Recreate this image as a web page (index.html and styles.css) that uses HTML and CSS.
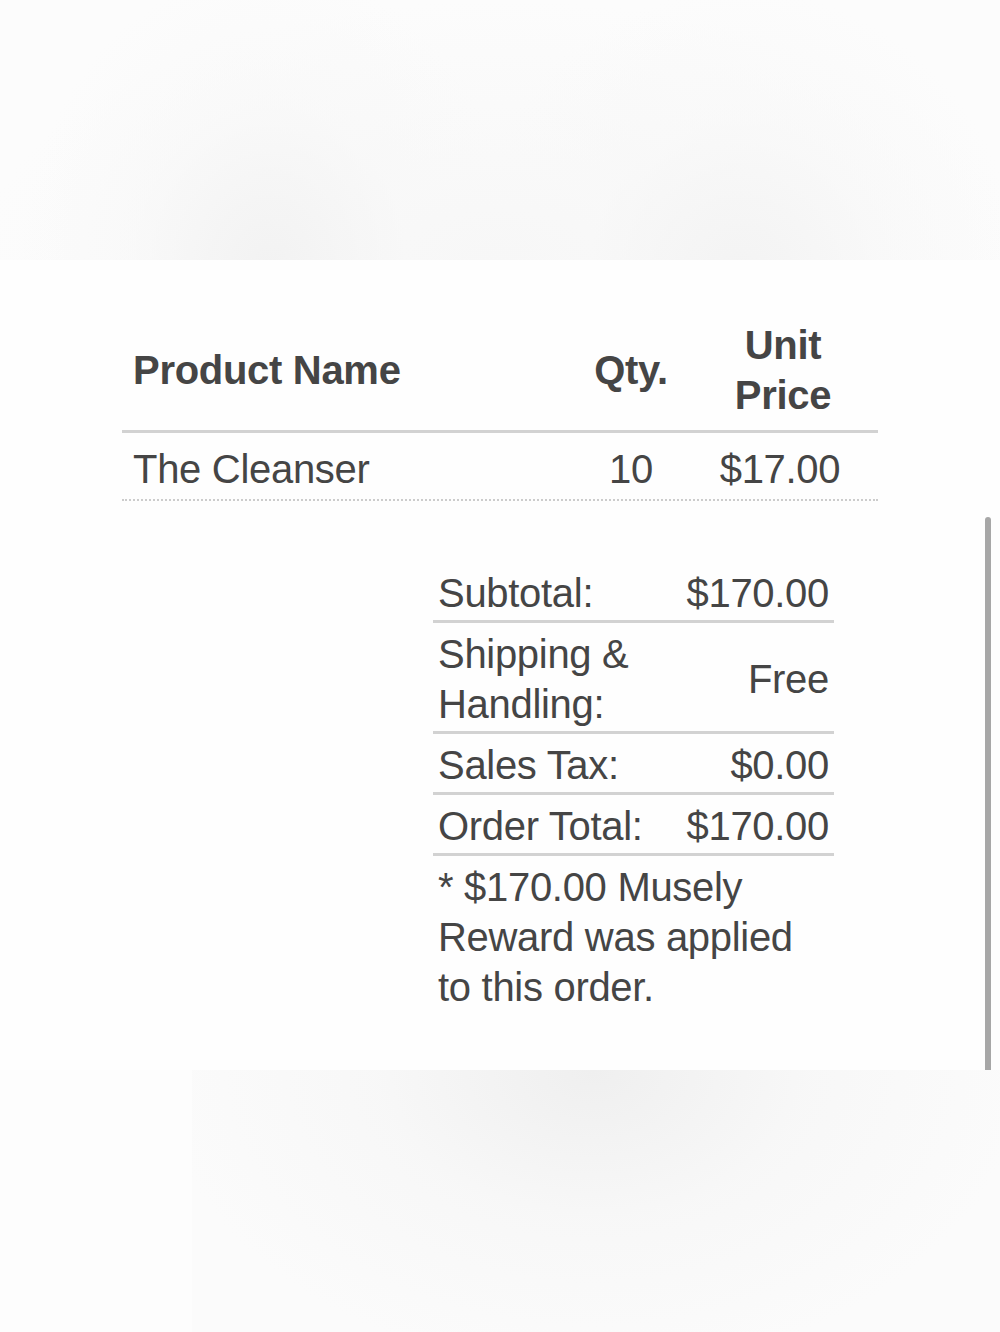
FILE: index.html
```html
<!DOCTYPE html>
<html lang="en">
<head>
<meta charset="utf-8">
<title>Order Summary</title>
<link rel="stylesheet" href="styles.css">
</head>
<body>
<div class="page">
  <div class="top-bg"></div>
  <main class="panel">
    <div class="items">
      <div class="items-head">
        <div class="c-name">Product Name</div>
        <div class="c-qty">Qty.</div>
        <div class="c-price">Unit<br>Price</div>
      </div>
      <div class="items-row">
        <div class="c-name">The Cleanser</div>
        <div class="c-qty">10</div>
        <div class="c-price">$17.00</div>
      </div>
    </div>

    <div class="summary">
      <div class="sum-row">
        <div class="sum-label">Subtotal:</div>
        <div class="sum-value">$170.00</div>
      </div>
      <div class="sum-row">
        <div class="sum-label">Shipping &amp; Handling:</div>
        <div class="sum-value">Free</div>
      </div>
      <div class="sum-row">
        <div class="sum-label">Sales Tax:</div>
        <div class="sum-value">$0.00</div>
      </div>
      <div class="sum-row">
        <div class="sum-label">Order Total:</div>
        <div class="sum-value">$170.00</div>
      </div>
      <p class="sum-note">* $170.00 Musely Reward was applied to this order.</p>
    </div>

    <div class="scrollbar"></div>
  </main>
  <div class="bottom-bg"></div>
</div>
</body>
</html>
```

FILE: styles.css
```css
* {
  box-sizing: border-box;
}

html, body {
  margin: 0;
  padding: 0;
}

body {
  background: #fcfcfc;
  font-family: "Liberation Sans", Arial, Helvetica, sans-serif;
  color: #454545;
}

.page {
  width: 1000px;
  height: 1332px;
  display: flex;
  flex-direction: column;
  overflow: hidden;
}

.top-bg {
  height: 260px;
  flex: none;
  background:
    radial-gradient(ellipse 250px 300px at 270px 270px, #f2f2f2 0%, rgba(248,248,248,0.6) 55%, rgba(252,252,252,0) 100%),
    radial-gradient(ellipse 280px 290px at 740px 280px, #f3f3f3 0%, rgba(248,248,248,0.6) 55%, rgba(252,252,252,0) 100%),
    radial-gradient(ellipse 520px 260px at 500px 260px, #f7f7f7 0%, rgba(252,252,252,0) 100%),
    #fcfcfc;
}

.panel {
  position: relative;
  height: 810px;
  flex: none;
  background: #fefefe;
  padding-top: 60px;
}

.items {
  margin-left: 122px;
  width: 756px;
  font-size: 40px;
  line-height: 50px;
  letter-spacing: -0.3px;
}

.items-head,
.items-row {
  display: grid;
  grid-template-columns: 458px 102px 196px;
  align-items: center;
}

.items-head {
  font-weight: bold;
  padding-bottom: 10px;
  border-bottom: 3px solid #d2d2d2;
}

.items-head .c-price {
  padding-left: 6px;
}

.items-row {
  padding-top: 11px;
  padding-bottom: 5px;
  border-bottom: 2px dotted #cccccc;
}

.c-name {
  padding-left: 11px;
}

.c-qty,
.c-price {
  text-align: center;
}

.summary {
  margin-top: 61px;
  margin-left: 433px;
  width: 401px;
  font-size: 40px;
  line-height: 50px;
  letter-spacing: -0.3px;
}

.sum-row {
  display: grid;
  grid-template-columns: 245px 156px;
  align-items: center;
  padding: 6px 0 2px;
  border-bottom: 3px solid #d2d2d2;
}

.sum-label {
  padding: 0 5px;
}

.sum-value {
  padding: 0 5px;
  text-align: right;
}

.sum-note {
  margin: 0;
  padding: 6px 5px 0;
}

.scrollbar {
  position: absolute;
  top: 257px;
  right: 9px;
  width: 6px;
  height: 553px;
  background: #a7a7a7;
  border-radius: 3px 3px 0 0;
}

.bottom-bg {
  flex: 1;
  background:
    radial-gradient(ellipse 430px 300px at 400px 0px, #efefef 0%, rgba(246,246,246,0.7) 50%, rgba(252,252,252,0) 100%) 192px 0 / 808px 100% no-repeat,
    linear-gradient(#fbfbfb, #fbfbfb) 192px 0 / 808px 100% no-repeat,
    #fdfdfd;
}
```
